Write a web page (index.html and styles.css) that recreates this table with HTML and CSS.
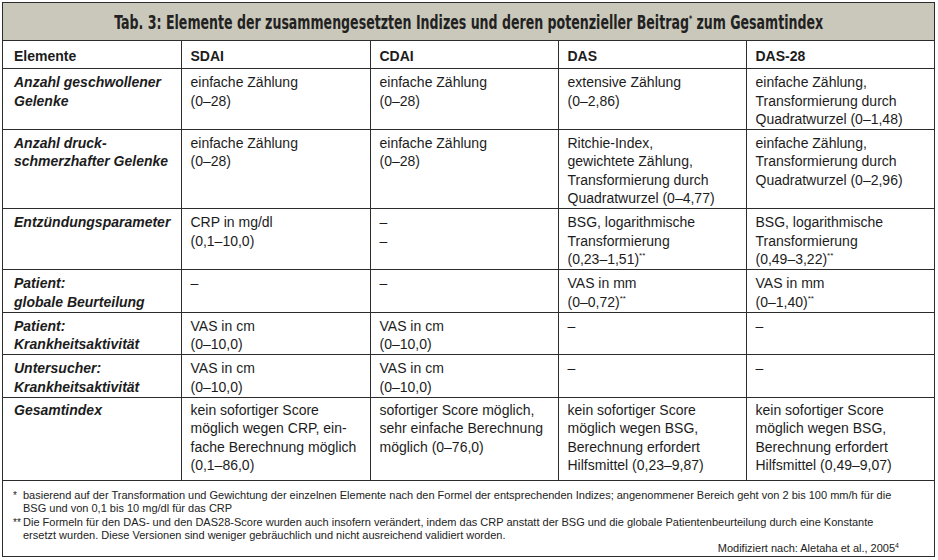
FILE: index.html
```html
<!DOCTYPE html>
<html lang="de">
<head>
<meta charset="utf-8">
<title>Tab. 3</title>
<link rel="stylesheet" href="styles.css">
</head>
<body>
<div class="box">
  <div class="title"><span class="title-text">Tab. 3: Elemente der zusammengesetzten Indizes und deren potenzieller Beitrag<sup class="tsup">*</sup> zum Gesamtindex</span></div>
  <table class="grid">
    <colgroup>
      <col class="c1"><col class="c2"><col class="c3"><col class="c4"><col class="c5">
    </colgroup>
    <tr class="head">
      <td>Elemente</td><td>SDAI</td><td>CDAI</td><td>DAS</td><td>DAS-28</td>
    </tr>
    <tr>
      <td class="el">Anzahl geschwollener<br>Gelenke</td>
      <td>einfache Zählung<br>(0–28)</td>
      <td>einfache Zählung<br>(0–28)</td>
      <td>extensive Zählung<br>(0–2,86)</td>
      <td>einfache Zählung,<br>Transformierung durch<br>Quadratwurzel (0–1,48)</td>
    </tr>
    <tr>
      <td class="el">Anzahl druck-<br>schmerzhafter Gelenke</td>
      <td>einfache Zählung<br>(0–28)</td>
      <td>einfache Zählung<br>(0–28)</td>
      <td>Ritchie-Index,<br>gewichtete Zählung,<br>Transformierung durch<br>Quadratwurzel (0–4,77)</td>
      <td>einfache Zählung,<br>Transformierung durch<br>Quadratwurzel (0–2,96)</td>
    </tr>
    <tr>
      <td class="el">Entzündungsparameter</td>
      <td>CRP in mg/dl<br>(0,1–10,0)</td>
      <td>–<br>–</td>
      <td>BSG, logarithmische<br>Transformierung<br>(0,23–1,51)<sup>**</sup></td>
      <td>BSG, logarithmische<br>Transformierung<br>(0,49–3,22)<sup>**</sup></td>
    </tr>
    <tr>
      <td class="el">Patient:<br>globale Beurteilung</td>
      <td>–</td>
      <td>–</td>
      <td>VAS in mm<br>(0–0,72)<sup>**</sup></td>
      <td>VAS in mm<br>(0–1,40)<sup>**</sup></td>
    </tr>
    <tr>
      <td class="el">Patient:<br>Krankheitsaktivität</td>
      <td>VAS in cm<br>(0–10,0)</td>
      <td>VAS in cm<br>(0–10,0)</td>
      <td>–</td>
      <td>–</td>
    </tr>
    <tr>
      <td class="el">Untersucher:<br>Krankheitsaktivität</td>
      <td>VAS in cm<br>(0–10,0)</td>
      <td>VAS in cm<br>(0–10,0)</td>
      <td>–</td>
      <td>–</td>
    </tr>
    <tr class="last">
      <td class="el">Gesamtindex</td>
      <td>kein sofortiger Score<br>möglich wegen CRP, ein-<br>fache Berechnung möglich<br>(0,1–86,0)</td>
      <td>sofortiger Score möglich,<br>sehr einfache Berechnung<br>möglich (0–76,0)</td>
      <td>kein sofortiger Score<br>möglich wegen BSG,<br>Berechnung erfordert<br>Hilfsmittel (0,23–9,87)</td>
      <td>kein sofortiger Score<br>möglich wegen BSG,<br>Berechnung erfordert<br>Hilfsmittel (0,49–9,07)</td>
    </tr>
  </table>
  <div class="notes">
    <div class="note"><span class="mark">*</span><span class="ntext">basierend auf der Transformation und Gewichtung der einzelnen Elemente nach den Formel der entsprechenden Indizes; angenommener Bereich geht von 2 bis 100 mm/h für die<br>BSG und von 0,1 bis 10 mg/dl für das CRP</span></div>
    <div class="note"><span class="mark">**</span><span class="ntext">Die Formeln für den DAS- und den DAS28-Score wurden auch insofern verändert, indem das CRP anstatt der BSG und die globale Patientenbeurteilung durch eine Konstante<br>ersetzt wurden. Diese Versionen sind weniger gebräuchlich und nicht ausreichend validiert worden.</span></div>
    <div class="source">Modifiziert nach: Aletaha et al., 2005<sup class="ref">4</sup></div>
  </div>
</div>
</body>
</html>
```
FILE: styles.css
```css
html, body {
  margin: 0;
  padding: 0;
  background: #ffffff;
}

body {
  font-family: "Liberation Sans", Arial, sans-serif;
  color: #1c1c1c;
}

.box {
  margin: 2px 0 0 2px;
  width: 931px;
  height: 553px;
  border: 1.5px solid #2c2c2c;
  display: flex;
  flex-direction: column;
}

.title {
  height: 37px;
  background: #cac8ba;
  border-bottom: 1.5px solid #2c2c2c;
  display: flex;
  align-items: center;
  justify-content: center;
  overflow: hidden;
}

.title-text {
  display: inline-block;
  flex: 0 0 auto;
  font-family: "DejaVu Sans Condensed", "Liberation Sans", sans-serif;
  font-stretch: condensed;
  font-weight: bold;
  font-size: 18.8px;
  color: #222;
  white-space: nowrap;
  padding-top: 1px;
  transform: scaleX(0.745);
  transform-origin: center;
}

.tsup {
  font-size: 9px;
  line-height: 0;
  vertical-align: 7px;
}

.grid {
  width: 931px;
  border-collapse: collapse;
  table-layout: fixed;
  font-size: 14px;
  line-height: 18.3px;
}

.c1 { width: 178px; }
.c2 { width: 189px; }
.c3 { width: 188px; }
.c4 { width: 188px; }
.c5 { width: 188px; }

.grid td {
  vertical-align: top;
  padding: 4px 6px 1px 9px;
  border-left: 1px solid #2c2c2c;
  border-bottom: 1px solid #2c2c2c;
  white-space: nowrap;
}

.grid td:first-child {
  border-left: 0;
  padding-left: 11px;
}

.grid .head td {
  font-weight: bold;
  padding-top: 6px;
  padding-bottom: 3px;
}

.grid td.el {
  font-weight: bold;
  font-style: italic;
}

.grid .last td {
  padding-top: 3px;
  padding-bottom: 6px;
}

.grid sup {
  font-size: 8px;
  line-height: 0;
  vertical-align: 6px;
}

.notes {
  padding: 8px 35px 0 10px;
  font-size: 11px;
  line-height: 13.2px;
  color: #222;
}

.note {
  display: flex;
}

.mark {
  flex: 0 0 10px;
  font-size: 10px;
}

.ntext {
  white-space: nowrap;
}

.source {
  text-align: right;
}

.ref {
  font-size: 7px;
  line-height: 0;
  vertical-align: 4px;
}
```
